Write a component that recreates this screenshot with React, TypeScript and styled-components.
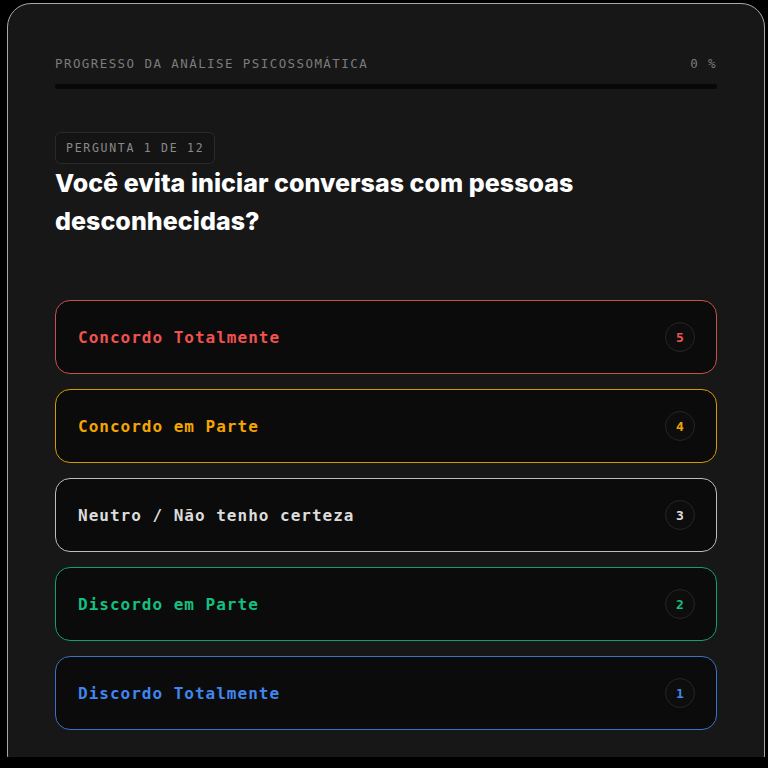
import React from "react";
import styled, { createGlobalStyle } from "styled-components";

const GlobalStyle = createGlobalStyle`
  html, body {
    margin: 0;
    padding: 0;
    background: #000;
  }
  * { box-sizing: border-box; }
`;

const MONO = `"DejaVu Sans Mono", "Liberation Mono", monospace`;
const SANS = `Inter, "Noto Sans", sans-serif`;

const Viewport = styled.div`
  height: 757px;
  overflow: hidden;
  padding: 3px 3px 0 7px;
`;

const Card = styled.main`
  background: #171717;
  border: 1.5px solid #a9a9a9;
  border-radius: 24px;
  padding: 48px 47px 48px 47px;
`;

const ProgressHead = styled.div`
  display: flex;
  justify-content: space-between;
  align-items: center;
  font-family: ${MONO};
  font-size: 12.5px;
  letter-spacing: 1.42px;
  color: #7c7c7c;
  text-transform: uppercase;
  line-height: 16px;
  margin-top: 4px;
`;

const Track = styled.div`
  margin-top: 12px;
  height: 5px;
  border-radius: 3px;
  background: #080808;
  overflow: hidden;
`;

const Fill = styled.div`
  height: 100%;
  background: #e5e5e5;
`;

const Badge = styled.span`
  display: inline-block;
  margin-top: 43px;
  padding: 7px 10px 7px 10px;
  border: 1px solid #2a2a2a;
  border-radius: 6px;
  background: #141414;
  font-family: ${MONO};
  font-size: 11.5px;
  letter-spacing: 1.72px;
  line-height: 16px;
  color: #8a8a8a;
`;

const Question = styled.h1`
  margin: 0;
  font-family: ${SANS};
  font-weight: 800;
  font-size: 25px;
  line-height: 38px;
  letter-spacing: 0.05px;
  color: #ffffff;
  max-width: 620px;
`;

const Options = styled.div`
  display: flex;
  flex-direction: column;
  gap: 15px;
  margin-top: 60px;
`;

const Option = styled.button<{ $tone: string; $edge: string }>`
  display: flex;
  align-items: center;
  justify-content: space-between;
  height: 74px;
  padding: 0 21px 0 22px;
  background: #0b0b0b;
  border: 1.5px solid ${(p) => p.$edge};
  border-radius: 15px;
  color: ${(p) => p.$tone};
  font-family: ${MONO};
  font-weight: 700;
  font-size: 16px;
  letter-spacing: 1px;
  text-align: left;
  cursor: pointer;
`;

const Score = styled.span<{ $tone: string }>`
  display: flex;
  align-items: center;
  justify-content: center;
  width: 30px;
  height: 30px;
  border-radius: 50%;
  border: 1px solid #262626;
  background: #0d0d0d;
  color: ${(p) => p.$tone};
  font-family: ${MONO};
  font-weight: 700;
  font-size: 13px;
  letter-spacing: 0;
`;

const answers = [
  { label: "Concordo Totalmente", value: 5, tone: "#f05252", edge: "#c9504f" },
  { label: "Concordo em Parte", value: 4, tone: "#f5a500", edge: "#d49a00" },
  { label: "Neutro / Não tenho certeza", value: 3, tone: "#dcdcdc", edge: "#bdbdbd" },
  { label: "Discordo em Parte", value: 2, tone: "#14c07f", edge: "#11a06f" },
  { label: "Discordo Totalmente", value: 1, tone: "#3f86f0", edge: "#3b73c4" },
];

export default function App() {
  const progress = 0;
  return (
    <>
      <GlobalStyle />
      <Viewport>
        <Card>
          <ProgressHead>
            <span>Progresso da Análise Psicossomática</span>
            <span>{progress} %</span>
          </ProgressHead>
          <Track>
            <Fill style={{ width: `${progress}%` }} />
          </Track>
          <Badge>PERGUNTA 1 DE 12</Badge>
          <Question>Você evita iniciar conversas com pessoas desconhecidas?</Question>
          <Options>
            {answers.map((a) => (
              <Option key={a.value} $tone={a.tone} $edge={a.edge}>
                <span>{a.label}</span>
                <Score $tone={a.tone}>{a.value}</Score>
              </Option>
            ))}
          </Options>
        </Card>
      </Viewport>
    </>
  );
}
